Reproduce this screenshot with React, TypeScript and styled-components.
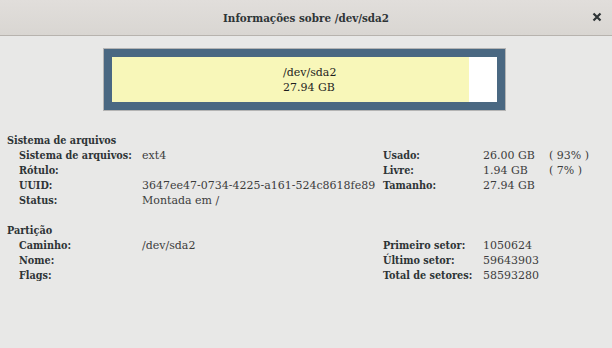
import React from "react";
import styled, { createGlobalStyle } from "styled-components";

const GlobalStyle = createGlobalStyle`
  html, body {
    margin: 0;
    padding: 0;
    background: #e8e8e7;
  }
  body {
    font-family: "DejaVu Serif", serif;
    color: #2e3436;
  }
`;

const condensed = `"DejaVu Serif Condensed", "DejaVu Serif", serif`;

const Window = styled.div`
  width: 612px;
  height: 348px;
  background: #e8e8e7;
  display: flex;
  flex-direction: column;
`;

const TitleBar = styled.div`
  height: 35px;
  flex: none;
  display: flex;
  align-items: center;
  justify-content: center;
  position: relative;
  background: linear-gradient(#e1dedb, #d9d6d2);
  border-bottom: 1px solid #b7b3ae;
`;

const Title = styled.div`
  font-family: ${condensed};
  font-weight: bold;
  font-size: 11.5px;
  color: #2e3436;
`;

const CloseButton = styled.div`
  position: absolute;
  right: 10px;
  top: 12px;
  width: 10px;
  height: 10px;
  svg {
    display: block;
  }
`;

const Body = styled.div`
  padding: 12px 7px 0 7px;
`;

const MapFrame = styled.div`
  margin: 0 0 0 96px;
  width: 403px;
  height: 63px;
  border: 1px solid #b4b4b4;
  background: #4a6882;
  padding: 8px;
  box-sizing: border-box;
`;

const MapInner = styled.div`
  display: flex;
  height: 100%;
  background: #ffffff;
`;

const UsedBar = styled.div`
  background: #f8f7b9;
  display: flex;
  flex-direction: column;
  justify-content: center;
  font-size: 11px;
  line-height: 15px;
  color: #1e1e1e;
  padding-left: 171px;
  box-sizing: border-box;
`;

const Section = styled.div<{ $top: number }>`
  margin-top: ${(p) => p.$top}px;
  font-size: 11px;
  line-height: 15px;
`;

const SectionTitle = styled.div`
  font-family: ${condensed};
  font-size: 10.75px;
  font-weight: bold;
`;

const Grid = styled.div`
  display: grid;
  grid-template-columns: 123px 241px 100px 66px auto;
  padding-left: 12px;
`;

const Label = styled.div`
  font-family: ${condensed};
  font-size: 10.75px;
  font-weight: bold;
  white-space: nowrap;
`;

const Value = styled.div`
  white-space: nowrap;
  color: #3c3c3c;
`;

type Row = [string, string, string, string, string];

const fsRows: Row[] = [
  ["Sistema de arquivos:", "ext4", "Usado:", "26.00 GB", "( 93% )"],
  ["Rótulo:", "", "Livre:", "1.94 GB", "( 7% )"],
  ["UUID:", "3647ee47-0734-4225-a161-524c8618fe89", "Tamanho:", "27.94 GB", ""],
  ["Status:", "Montada em /", "", "", ""],
];

const partRows: Row[] = [
  ["Caminho:", "/dev/sda2", "Primeiro setor:", "1050624", ""],
  ["Nome:", "", "Último setor:", "59643903", ""],
  ["Flags:", "", "Total de setores:", "58593280", ""],
];

function InfoGrid(props: { rows: Row[] }) {
  return (
    <Grid>
      {props.rows.map((r, i) => (
        <React.Fragment key={i}>
          <Label>{r[0]}</Label>
          <Value>{r[1]}</Value>
          <Label>{r[2]}</Label>
          <Value>{r[3]}</Value>
          <Value>{r[4]}</Value>
        </React.Fragment>
      ))}
    </Grid>
  );
}

export default function App() {
  const used = 356 / 384;
  return (
    <Window>
      <GlobalStyle />
      <TitleBar>
        <Title>Informações sobre /dev/sda2</Title>
        <CloseButton>
          <svg width="10" height="10" viewBox="0 0 10 10">
            <path d="M1.5 1.5 L8.5 8.5 M8.5 1.5 L1.5 8.5" stroke="#2e3436" strokeWidth="2.2" />
          </svg>
        </CloseButton>
      </TitleBar>
      <Body>
        <MapFrame>
          <MapInner>
            <UsedBar style={{ width: `${used * 100}%` }}>
              <div>/dev/sda2</div>
              <div>27.94 GB</div>
            </UsedBar>
          </MapInner>
        </MapFrame>
        <Section $top={22}>
          <SectionTitle>Sistema de arquivos</SectionTitle>
          <InfoGrid rows={fsRows} />
        </Section>
        <Section $top={15}>
          <SectionTitle>Partição</SectionTitle>
          <InfoGrid rows={partRows} />
        </Section>
      </Body>
    </Window>
  );
}
